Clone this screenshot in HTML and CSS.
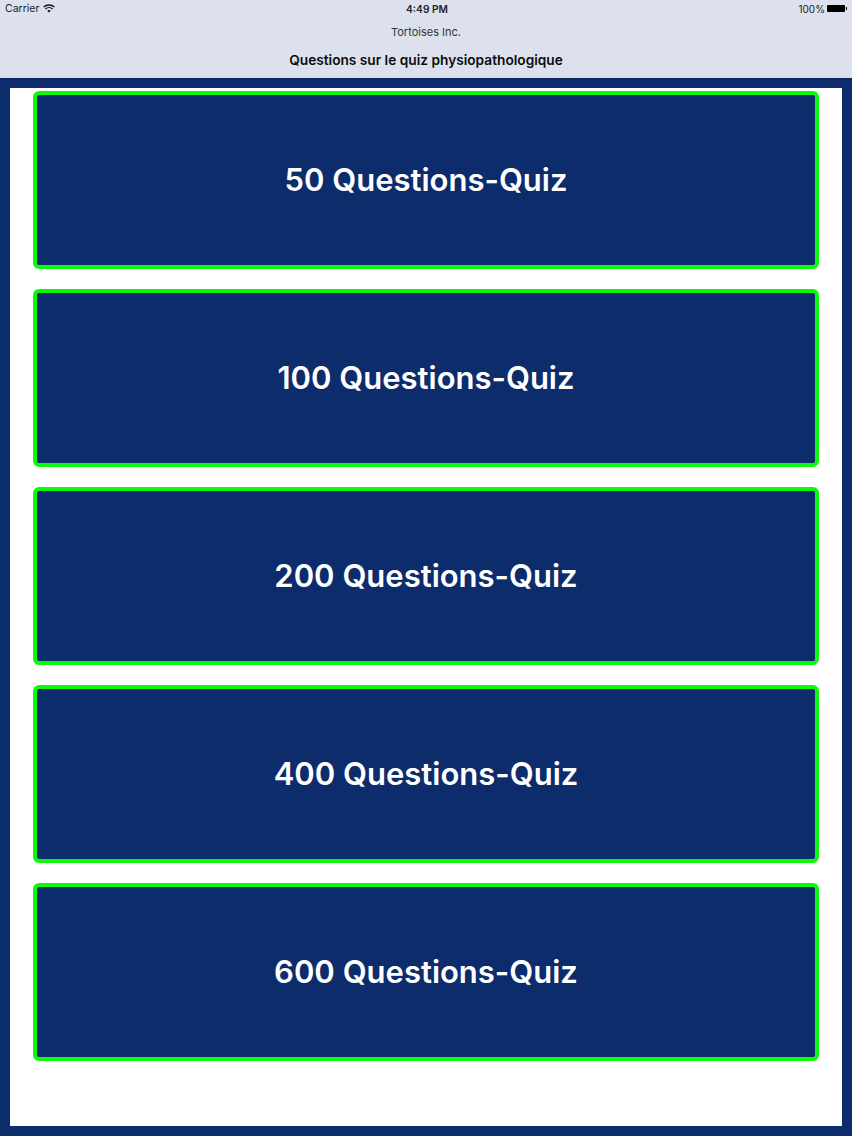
FILE: index.html
```html
<!DOCTYPE html>
<html lang="en">
<head>
  <meta charset="UTF-8">
  <meta name="viewport" content="width=device-width, initial-scale=1.0">
  <title>Questions sur le quiz physiopathologique</title>
  <link rel="stylesheet" href="styles.css">
</head>
<body>
  <header class="top-bar">
    <div class="status-bar">
      <div class="status-left">
        <span>Carrier</span>
        <svg class="wifi" width="12" height="9" viewBox="0 0 12 9" fill="none" stroke="#111" stroke-width="1.3">
          <path d="M0.6 3.1C3.6 0.3 8.4 0.3 11.4 3.1"></path>
          <path d="M2.4 5C4.4 3.2 7.6 3.2 9.6 5"></path>
          <path d="M6 8.6L4.2 6.7C5.2 5.9 6.8 5.9 7.8 6.7Z" fill="#111" stroke="none"></path>
        </svg>
      </div>
      <div class="status-time">4:49 PM</div>
      <div class="status-right">
        <span>100%</span>
        <div class="battery"></div>
      </div>
    </div>
    <div class="app-name">Tortoises Inc.</div>
    <div class="page-title">Questions sur le quiz physiopathologique</div>
  </header>

  <main class="panel">
    <button class="quiz-btn">50 Questions-Quiz</button>
    <button class="quiz-btn">100 Questions-Quiz</button>
    <button class="quiz-btn">200 Questions-Quiz</button>
    <button class="quiz-btn">400 Questions-Quiz</button>
    <button class="quiz-btn">600 Questions-Quiz</button>
  </main>
</body>
</html>
```

FILE: styles.css
```css
html, body {
  height: 100%;
}

body {
  margin: 0;
  background-color: #0d2c6b;
  font-family: Inter, "Liberation Sans", sans-serif;
  display: flex;
  flex-direction: column;
  overflow: hidden;
}

.top-bar {
  height: 79px;
  box-sizing: border-box;
  background-color: #dde1ee;
  color: #111;
  text-align: center;
  border-bottom: 1px solid #0a2458;
}

.status-bar {
  display: flex;
  justify-content: space-between;
  align-items: center;
  height: 17px;
  padding: 0 5px;
  font-size: 10.5px;
  color: #222;
}

.status-left,
.status-right {
  display: flex;
  align-items: center;
  gap: 4px;
  width: 120px;
}

.status-right {
  justify-content: flex-end;
  gap: 2px;
  font-size: 10px;
}

.status-time {
  font-weight: 600;
  font-size: 10.2px;
  padding-left: 2px;
}

.battery {
  position: relative;
  width: 18px;
  height: 7px;
  margin-right: 2px;
  background-color: #000;
  border-radius: 1px;
}

.battery::after {
  content: "";
  position: absolute;
  top: 2px;
  right: -2px;
  width: 1px;
  height: 3px;
  background-color: #000;
}

.app-name {
  margin-top: 8px;
  font-size: 11px;
  line-height: 14px;
  color: #333;
}

.page-title {
  margin-top: 14px;
  font-size: 13.7px;
  line-height: 14px;
  font-weight: 600;
  color: #0c0c0c;
  border-bottom: 1px solid #d9dcea;
}

.panel {
  flex: 1;
  margin: 9px 10px 10px;
  padding: 3px 23px 0;
  background-color: #fff;
  display: flex;
  flex-direction: column;
  gap: 20px;
}

.quiz-btn {
  height: 178px;
  flex-shrink: 0;
  box-sizing: border-box;
  padding-bottom: 2px;
  background-color: #0d2c6b;
  border: 4px solid #0cf80c;
  border-radius: 6px;
  color: #fff;
  font-family: inherit;
  font-size: 31px;
  font-weight: 600;
  cursor: pointer;
}
```
